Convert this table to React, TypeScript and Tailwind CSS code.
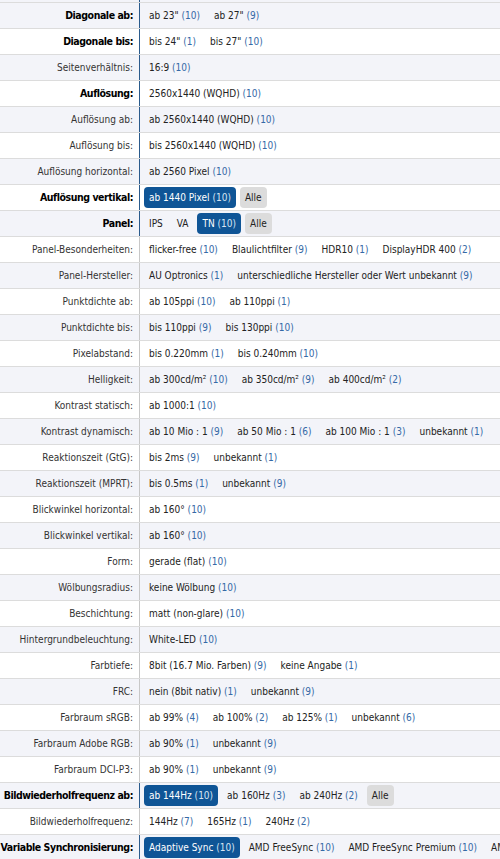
type Item = { t: string; n?: string; sel?: boolean; all?: boolean }
type Row = { label: string; bold?: boolean; dark?: boolean; items: Item[] }

const v = (t: string, n?: string): Item => ({ t, n })
const sel = (t: string, n: string): Item => ({ t, n, sel: true })
const alle: Item = { t: 'Alle', all: true }

const rows: Row[] = [
  { label: 'Diagonale ab:', bold: true, dark: true, items: [v('ab 23"', '10'), v('ab 27"', '9')] },
  { label: 'Diagonale bis:', bold: true, dark: true, items: [v('bis 24"', '1'), v('bis 27"', '10')] },
  { label: 'Seitenverhältnis:', dark: true, items: [v('16:9', '10')] },
  { label: 'Auflösung:', bold: true, dark: true, items: [v('2560x1440 (WQHD)', '10')] },
  { label: 'Auflösung ab:', dark: true, items: [v('ab 2560x1440 (WQHD)', '10')] },
  { label: 'Auflösung bis:', dark: true, items: [v('bis 2560x1440 (WQHD)', '10')] },
  { label: 'Auflösung horizontal:', dark: true, items: [v('ab 2560 Pixel', '10')] },
  { label: 'Auflösung vertikal:', bold: true, dark: true, items: [sel('ab 1440 Pixel', '10'), alle] },
  { label: 'Panel:', bold: true, dark: true, items: [v('IPS'), v('VA'), sel('TN', '10'), alle] },
  { label: 'Panel-Besonderheiten:', items: [v('flicker-free', '10'), v('Blaulichtfilter', '9'), v('HDR10', '1'), v('DisplayHDR 400', '2')] },
  { label: 'Panel-Hersteller:', items: [v('AU Optronics', '1'), v('unterschiedliche Hersteller oder Wert unbekannt', '9')] },
  { label: 'Punktdichte ab:', items: [v('ab 105ppi', '10'), v('ab 110ppi', '1')] },
  { label: 'Punktdichte bis:', items: [v('bis 110ppi', '9'), v('bis 130ppi', '10')] },
  { label: 'Pixelabstand:', items: [v('bis 0.220mm', '1'), v('bis 0.240mm', '10')] },
  { label: 'Helligkeit:', items: [v('ab 300cd/m²', '10'), v('ab 350cd/m²', '9'), v('ab 400cd/m²', '2')] },
  { label: 'Kontrast statisch:', items: [v('ab 1000:1', '10')] },
  { label: 'Kontrast dynamisch:', items: [v('ab 10 Mio : 1', '9'), v('ab 50 Mio : 1', '6'), v('ab 100 Mio : 1', '3'), v('unbekannt', '1')] },
  { label: 'Reaktionszeit (GtG):', items: [v('bis 2ms', '9'), v('unbekannt', '1')] },
  { label: 'Reaktionszeit (MPRT):', items: [v('bis 0.5ms', '1'), v('unbekannt', '9')] },
  { label: 'Blickwinkel horizontal:', items: [v('ab 160°', '10')] },
  { label: 'Blickwinkel vertikal:', items: [v('ab 160°', '10')] },
  { label: 'Form:', items: [v('gerade (flat)', '10')] },
  { label: 'Wölbungsradius:', items: [v('keine Wölbung', '10')] },
  { label: 'Beschichtung:', items: [v('matt (non-glare)', '10')] },
  { label: 'Hintergrundbeleuchtung:', items: [v('White-LED', '10')] },
  { label: 'Farbtiefe:', items: [v('8bit (16.7 Mio. Farben)', '9'), v('keine Angabe', '1')] },
  { label: 'FRC:', items: [v('nein (8bit nativ)', '1'), v('unbekannt', '9')] },
  { label: 'Farbraum sRGB:', items: [v('ab 99%', '4'), v('ab 100%', '2'), v('ab 125%', '1'), v('unbekannt', '6')] },
  { label: 'Farbraum Adobe RGB:', items: [v('ab 90%', '1'), v('unbekannt', '9')] },
  { label: 'Farbraum DCI-P3:', items: [v('ab 90%', '1'), v('unbekannt', '9')] },
  { label: 'Bildwiederholfrequenz ab:', bold: true, dark: true, items: [sel('ab 144Hz', '10'), v('ab 160Hz', '3'), v('ab 240Hz', '2'), alle] },
  { label: 'Bildwiederholfrequenz:', items: [v('144Hz', '7'), v('165Hz', '1'), v('240Hz', '2')] },
  { label: 'Variable Synchronisierung:', bold: true, dark: true, items: [sel('Adaptive Sync', '10'), v('AMD FreeSync', '10'), v('AMD FreeSync Premium', '10'), v('AMD FreeSync Premium Pro', '2')] },
]

function Chip({ item }: { item: Item }) {
  if (item.sel) {
    return (
      <span className="rounded-[4px] bg-[#0f5596] px-[5px] py-[3px] text-white">
        {item.t} <span className="text-[#d6e4f3]">({item.n})</span>
      </span>
    )
  }
  if (item.all) {
    return <span className="rounded-[4px] bg-[#dcdcdc] px-[5px] py-[3px] text-[#222]">{item.t}</span>
  }
  return (
    <span className="px-[5px] py-[3px] text-[#222]">
      {item.t}
      {item.n && <span className="text-[#3569a6]"> ({item.n})</span>}
    </span>
  )
}

export default function App() {
  return (
    <div className="w-[500px] overflow-hidden bg-white font-['DejaVu_Sans',Verdana,sans-serif] text-[10px] font-stretch-condensed">
      <div className="flex h-[2px] bg-[#f3f4f9]">
        <div className="w-[139px] shrink-0" />
        <div className="border-l border-[#2b5b8c]" />
      </div>
      {rows.map((r, i) => (
        <div
          key={r.label}
          className={`flex h-[26px] border-t border-[#dcdcdc] ${i % 2 === 0 ? 'bg-[#f3f4f9]' : 'bg-white'}`}
        >
          <div
            className={`flex w-[139px] shrink-0 items-center justify-end overflow-hidden whitespace-nowrap pr-[6px] ${
              r.bold ? 'text-[10.5px] font-bold tracking-[-0.45px] text-black' : 'text-[#333]'
            }`}
          >
            {r.label}
          </div>
          <div
            className={`flex min-w-0 flex-1 items-center gap-[4px] overflow-hidden whitespace-nowrap border-l pl-[4px] ${
              r.dark ? 'border-[#2b5b8c]' : 'border-[#c8c8c8]'
            }`}
          >
            {r.items.map((it, j) => (
              <Chip key={j} item={it} />
            ))}
          </div>
        </div>
      ))}
    </div>
  )
}
